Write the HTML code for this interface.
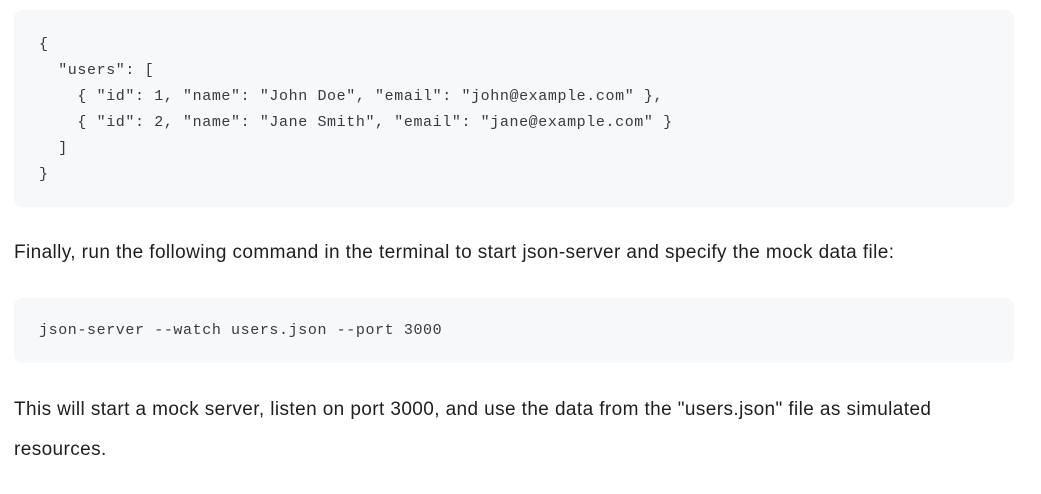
<!DOCTYPE html>
<html><head><style>
body{margin:0;background:#fff;width:1041px;height:494px;overflow:hidden;font-family:"Liberation Sans",Arial,sans-serif;}
.code{position:absolute;left:14px;width:1000px;background:#f6f8fa;border-radius:8px;}
.code pre{margin:0;position:absolute;left:25px;font-family:"Liberation Mono",monospace;font-size:15px;letter-spacing:0.6px;color:#383a42;line-height:26px;}
p{position:absolute;left:14px;margin:0;font-size:19px;letter-spacing:0.4px;color:#1f1f1f;}
</style></head><body>
<div class="code" style="top:10px;height:197px;"><pre style="top:22px;">{
  "users": [
    { "id": 1, "name": "John Doe", "email": "john@example.com" },
    { "id": 2, "name": "Jane Smith", "email": "jane@example.com" }
  ]
}</pre></div>
<p style="top:242px;">Finally, run the following command in the terminal to start json-server and specify the mock data file:</p>
<div class="code" style="top:298px;height:65px;"><pre style="top:20px;">json-server --watch users.json --port 3000</pre></div>
<p style="top:390px;line-height:40px;width:960px;">This will start a mock server, listen on port 3000, and use the data from the "users.json" file as simulated resources.</p>
</body></html>
